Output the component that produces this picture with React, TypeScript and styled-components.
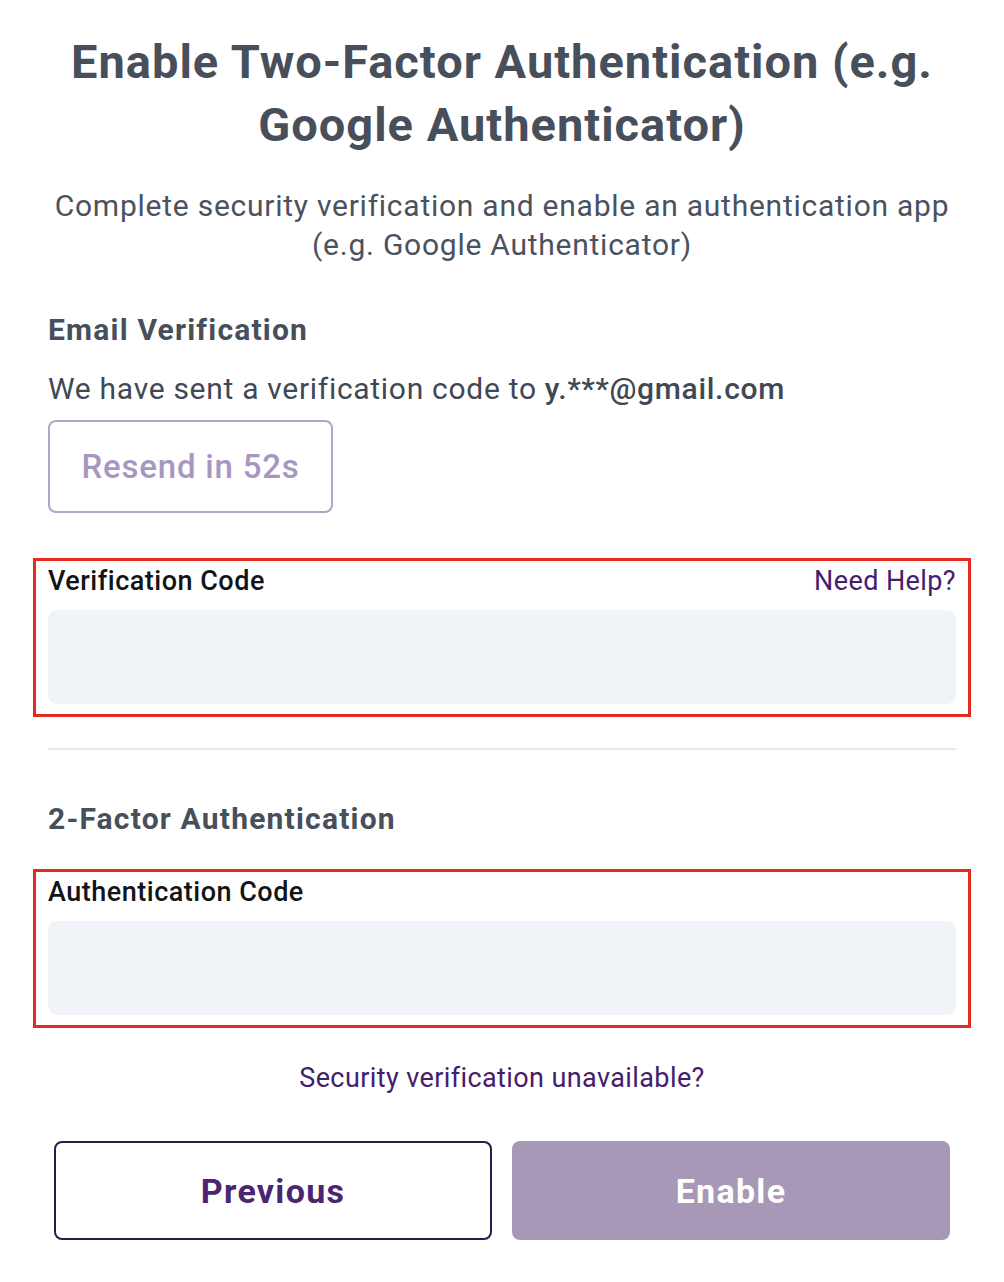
import React from "react";
import styled, {createGlobalStyle} from "styled-components";

const GlobalStyle = createGlobalStyle`
  html, body {
    margin: 0;
    padding: 0;
    background: #ffffff;
  }
  body {
    font-family: Roboto, "Liberation Sans", sans-serif;
    -webkit-font-smoothing: antialiased;
  }
  * {
    box-sizing: border-box;
  }
`;

const Page = styled.div`
  width: 1004px;
  padding: 30px 48px 40px;
  display: flex;
  flex-direction: column;
`;

const Title = styled.h1`
  margin: 0;
  font-size: 47px;
  line-height: 63px;
  font-weight: 700;
  letter-spacing: 1px;
  color: #474f5b;
  text-align: center;
`;

const Subtitle = styled.p`
  margin: 30px 0 0;
  font-size: 30px;
  line-height: 39px;
  letter-spacing: 0.75px;
  color: #4a525f;
  text-align: center;
`;

const SectionTitle = styled.h2<{ $top: number }>`
  margin: ${(p) => p.$top}px 0 0;
  font-size: 30px;
  line-height: 36px;
  font-weight: 700;
  letter-spacing: 1.2px;
  color: #474f5b;
`;

const Body = styled.p`
  margin: 23px 0 0;
  font-size: 30px;
  line-height: 36px;
  letter-spacing: 0.7px;
  color: #3f4854;

  strong {
    font-weight: 500;
    color: #3f4854;
  }
`;

const ResendButton = styled.button`
  margin-top: 13px;
  align-self: flex-start;
  width: 285px;
  height: 93px;
  border: 2px solid #b3a4cb;
  border-radius: 8px;
  background: #ffffff;
  color: #a797c0;
  font-family: inherit;
  font-size: 33px;
  font-weight: 500;
  letter-spacing: 0.8px;
`;

const Highlight = styled.div<{ $top: number }>`
  margin: ${(p) => p.$top}px -15px 0;
  padding: 5px 12px 10px;
  border: 3px solid #e32b1f;
`;

const LabelRow = styled.div`
  display: flex;
  justify-content: space-between;
  align-items: center;
  height: 30px;
`;

const Label = styled.label`
  font-size: 27px;
  font-weight: 500;
  letter-spacing: 0.5px;
  color: #121417;
`;

const HelpLink = styled.a`
  font-size: 27px;
  letter-spacing: 0.4px;
  color: #43206b;
  text-decoration: none;
`;

const Input = styled.input`
  display: block;
  width: 100%;
  height: 94px;
  margin-top: 14px;
  border: none;
  border-radius: 9px;
  background: #f0f3f7;
  font-family: inherit;
  font-size: 28px;
  padding: 0 20px;
  outline: none;
`;

const Divider = styled.hr`
  margin: 31px 0 0;
  border: none;
  border-top: 2px solid #e4e9ef;
`;

const CenterLink = styled.a`
  margin-top: 34px;
  align-self: center;
  font-size: 27px;
  line-height: 32px;
  letter-spacing: 0.4px;
  color: #43206b;
  text-decoration: none;
`;

const ButtonRow = styled.div`
  margin-top: 47px;
  padding: 0 6px;
  display: grid;
  grid-template-columns: 1fr 1fr;
  gap: 20px;
`;

const ActionButton = styled.button<{ $primary?: boolean }>`
  height: 99px;
  border-radius: 8px;
  font-family: inherit;
  font-size: 34px;
  font-weight: 700;
  letter-spacing: 1.3px;
  border: 2px solid ${(p) => (p.$primary ? "#a898b8" : "#2b1a4c")};
  background: ${(p) => (p.$primary ? "#a898b8" : "#ffffff")};
  color: ${(p) => (p.$primary ? "#ffffff" : "#4b2472")};
`;

export default function App() {
    return (
        <>
            <GlobalStyle/>
            <Page>
                <Title>Enable Two-Factor Authentication (e.g. Google Authenticator)</Title>
                <Subtitle>Complete security verification and enable an authentication app (e.g. Google Authenticator)</Subtitle>

                <SectionTitle $top={48}>Email Verification</SectionTitle>
                <Body>We have sent a verification code to <strong>y.***@gmail.com</strong></Body>
                <ResendButton disabled>Resend in 52s</ResendButton>

                <Highlight $top={45}>
                    <LabelRow>
                        <Label>Verification Code</Label>
                        <HelpLink href="#">Need Help?</HelpLink>
                    </LabelRow>
                    <Input type="text"/>
                </Highlight>

                <Divider/>

                <SectionTitle $top={51}>2-Factor Authentication</SectionTitle>

                <Highlight $top={32}>
                    <LabelRow>
                        <Label>Authentication Code</Label>
                    </LabelRow>
                    <Input type="text"/>
                </Highlight>

                <CenterLink href="#">Security verification unavailable?</CenterLink>

                <ButtonRow>
                    <ActionButton>Previous</ActionButton>
                    <ActionButton $primary disabled>Enable</ActionButton>
                </ButtonRow>
            </Page>
        </>
    );
}
